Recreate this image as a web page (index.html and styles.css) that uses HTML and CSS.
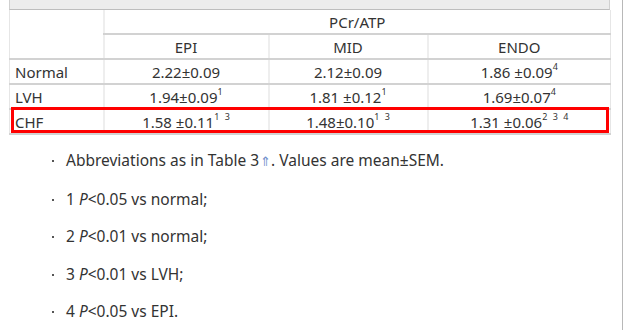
FILE: index.html
```html
<!DOCTYPE html>
<html>
<head>
<meta charset="utf-8">
<link rel="stylesheet" href="styles.css">
</head>
<body>
<div class="page">
  <div class="topbar"></div>
  <div class="table-wrap">
    <table class="data">
      <colgroup>
        <col class="c0"><col class="c1"><col class="c2"><col class="c3">
      </colgroup>
      <thead>
        <tr>
          <th class="blank" rowspan="2"></th>
          <th colspan="3">PCr/ATP</th>
        </tr>
        <tr>
          <th>EPI</th><th>MID</th><th>ENDO</th>
        </tr>
      </thead>
      <tbody>
        <tr>
          <td class="lab">Normal</td>
          <td>2.22±0.09</td>
          <td>2.12±0.09</td>
          <td>1.86 ±0.09<sup>4</sup></td>
        </tr>
        <tr>
          <td class="lab">LVH</td>
          <td>1.94±0.09<sup>1</sup></td>
          <td>1.81 ±0.12<sup>1</sup></td>
          <td>1.69±0.07<sup>4</sup></td>
        </tr>
        <tr>
          <td class="lab">CHF</td>
          <td>1.58 ±0.11<sup>1 3</sup></td>
          <td>1.48±0.10<sup>1 3</sup></td>
          <td>1.31 ±0.06<sup>2 3 4</sup></td>
        </tr>
      </tbody>
    </table>
    <div class="highlight"></div>
  </div>
  <ul class="notes">
    <li>Abbreviations as in Table 3<span class="arrow">⇑</span>. Values are mean±SEM.</li>
    <li>1 <i>P</i>&lt;0.05 vs normal;</li>
    <li>2 <i>P</i>&lt;0.01 vs normal;</li>
    <li>3 <i>P</i>&lt;0.01 vs LVH;</li>
    <li>4 <i>P</i>&lt;0.05 vs EPI.</li>
  </ul>
</div>
</body>
</html>
```

FILE: styles.css
```css
html, body {
  margin: 0;
  padding: 0;
  background: #fff;
}
body {
  font-family: "Noto Sans", "Open Sans", sans-serif;
  font-size: 15px;
  color: #333;
}
.page {
  width: 623px;
  min-height: 330px;
  border-right: 1px solid #b8b8b8;
  box-sizing: border-box;
  padding-left: 9px;
}
.topbar {
  width: 601px;
  height: 10px;
  background: #ececec;
  border-left: 1px solid #d0d0d0;
  border-right: 1px solid #d0d0d0;
  border-bottom: 1px solid #bdbdbd;
  box-sizing: border-box;
}
.table-wrap {
  position: relative;
  width: 601px;
}
.data {
  width: 601px;
  border-collapse: collapse;
  table-layout: fixed;
  border-left: 1px solid #e6e6e6;
  border-right: 1px solid #e6e6e6;
}
.c0 { width: 94px; }
.c1 { width: 165px; }
.c2 { width: 159px; }
.c3 { width: 183px; }
.data th, .data td {
  height: 23px;
  padding: 0 4px;
  font-weight: normal;
  text-align: center;
  border-bottom: 2px solid #d2d2d2;
  border-left: 2px solid #eeeeee;
  vertical-align: middle;
  line-height: 18px;
  white-space: nowrap;
}
.data td.lab {
  text-align: left;
  padding-left: 5px;
}
.data th.blank {
  border-left: none;
}
.data td.lab { border-left: none; }
.data sup {
  font-size: 9px;
  vertical-align: 8px;
  line-height: 0;
  word-spacing: 3px;
}
.highlight {
  position: absolute;
  left: 2px;
  top: 97px;
  width: 598px;
  height: 26px;
  border: 3px solid #ff0000;
  box-sizing: border-box;
}
.notes {
  list-style: none;
  margin: 15px 0 0 0;
  padding: 0 0 0 43px;
  font-size: 15.5px;
}
.notes li {
  position: relative;
  padding-left: 14px;
  line-height: 21px;
  margin-bottom: 16.5px;
}
.notes li::before {
  content: "";
  position: absolute;
  left: 0;
  top: 10px;
  width: 2px;
  height: 2px;
  background: #555;
}
.arrow {
  color: #6f8fcc;
  font-size: 13px;
  padding-left: 1px;
}
```
